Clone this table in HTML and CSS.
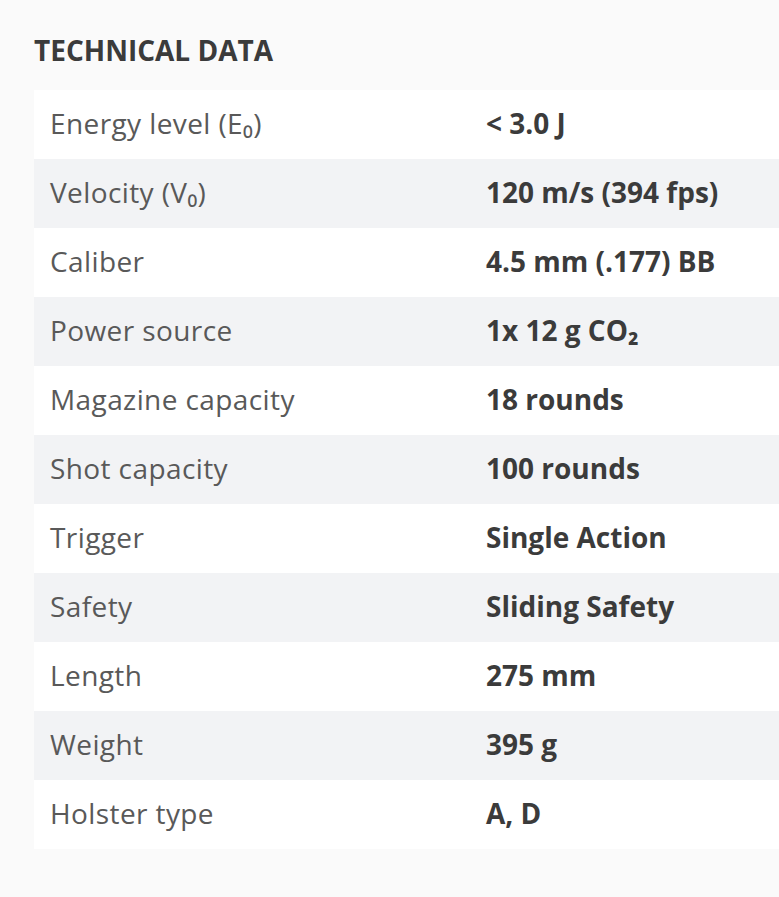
FILE: index.html
```html
<!DOCTYPE html>
<html>
<head>
<meta charset="utf-8">
<link rel="stylesheet" href="styles.css">
</head>
<body>
<section class="tech">
  <h2 class="tech-title">TECHNICAL DATA</h2>
  <div class="tech-table">
    <div class="row"><div class="label">Energy level (E₀)</div><div class="value">&lt; 3.0 J</div></div>
    <div class="row"><div class="label">Velocity (V₀)</div><div class="value">120 m/s (394 fps)</div></div>
    <div class="row"><div class="label">Caliber</div><div class="value">4.5 mm (.177) BB</div></div>
    <div class="row"><div class="label">Power source</div><div class="value">1x 12 g CO₂</div></div>
    <div class="row"><div class="label">Magazine capacity</div><div class="value">18 rounds</div></div>
    <div class="row"><div class="label">Shot capacity</div><div class="value">100 rounds</div></div>
    <div class="row"><div class="label">Trigger</div><div class="value">Single Action</div></div>
    <div class="row"><div class="label">Safety</div><div class="value">Sliding Safety</div></div>
    <div class="row"><div class="label">Length</div><div class="value">275 mm</div></div>
    <div class="row"><div class="label">Weight</div><div class="value">395 g</div></div>
    <div class="row"><div class="label">Holster type</div><div class="value">A, D</div></div>
  </div>
</section>
</body>
</html>
```
FILE: styles.css
```css
html, body {
  margin: 0;
  padding: 0;
  background: #fafafa;
}
body {
  font-family: "Open Sans", "Liberation Sans", sans-serif;
}
.tech {
  padding: 32px 0 0 34px;
}
.tech-title {
  margin: 0 0 22px 0;
  font-size: 28px;
  line-height: 36px;
  font-weight: 700;
  color: #3b3b3b;
}
.tech-table {
  display: flex;
  flex-direction: column;
}
.row {
  display: grid;
  grid-template-columns: 436px 1fr;
  height: 69px;
  box-sizing: border-box;
  padding-bottom: 4px;
  align-items: center;
  background: #ffffff;
}
.row:nth-child(even) {
  background: #f2f3f5;
}
.label {
  padding-left: 16px;
  font-size: 28px;
  line-height: 36px;
  letter-spacing: 0.4px;
  color: #595959;
  white-space: nowrap;
}
.value {
  padding-left: 16px;
  font-size: 28px;
  line-height: 36px;
  font-weight: 700;
  color: #3b3b3b;
  white-space: nowrap;
}
```
